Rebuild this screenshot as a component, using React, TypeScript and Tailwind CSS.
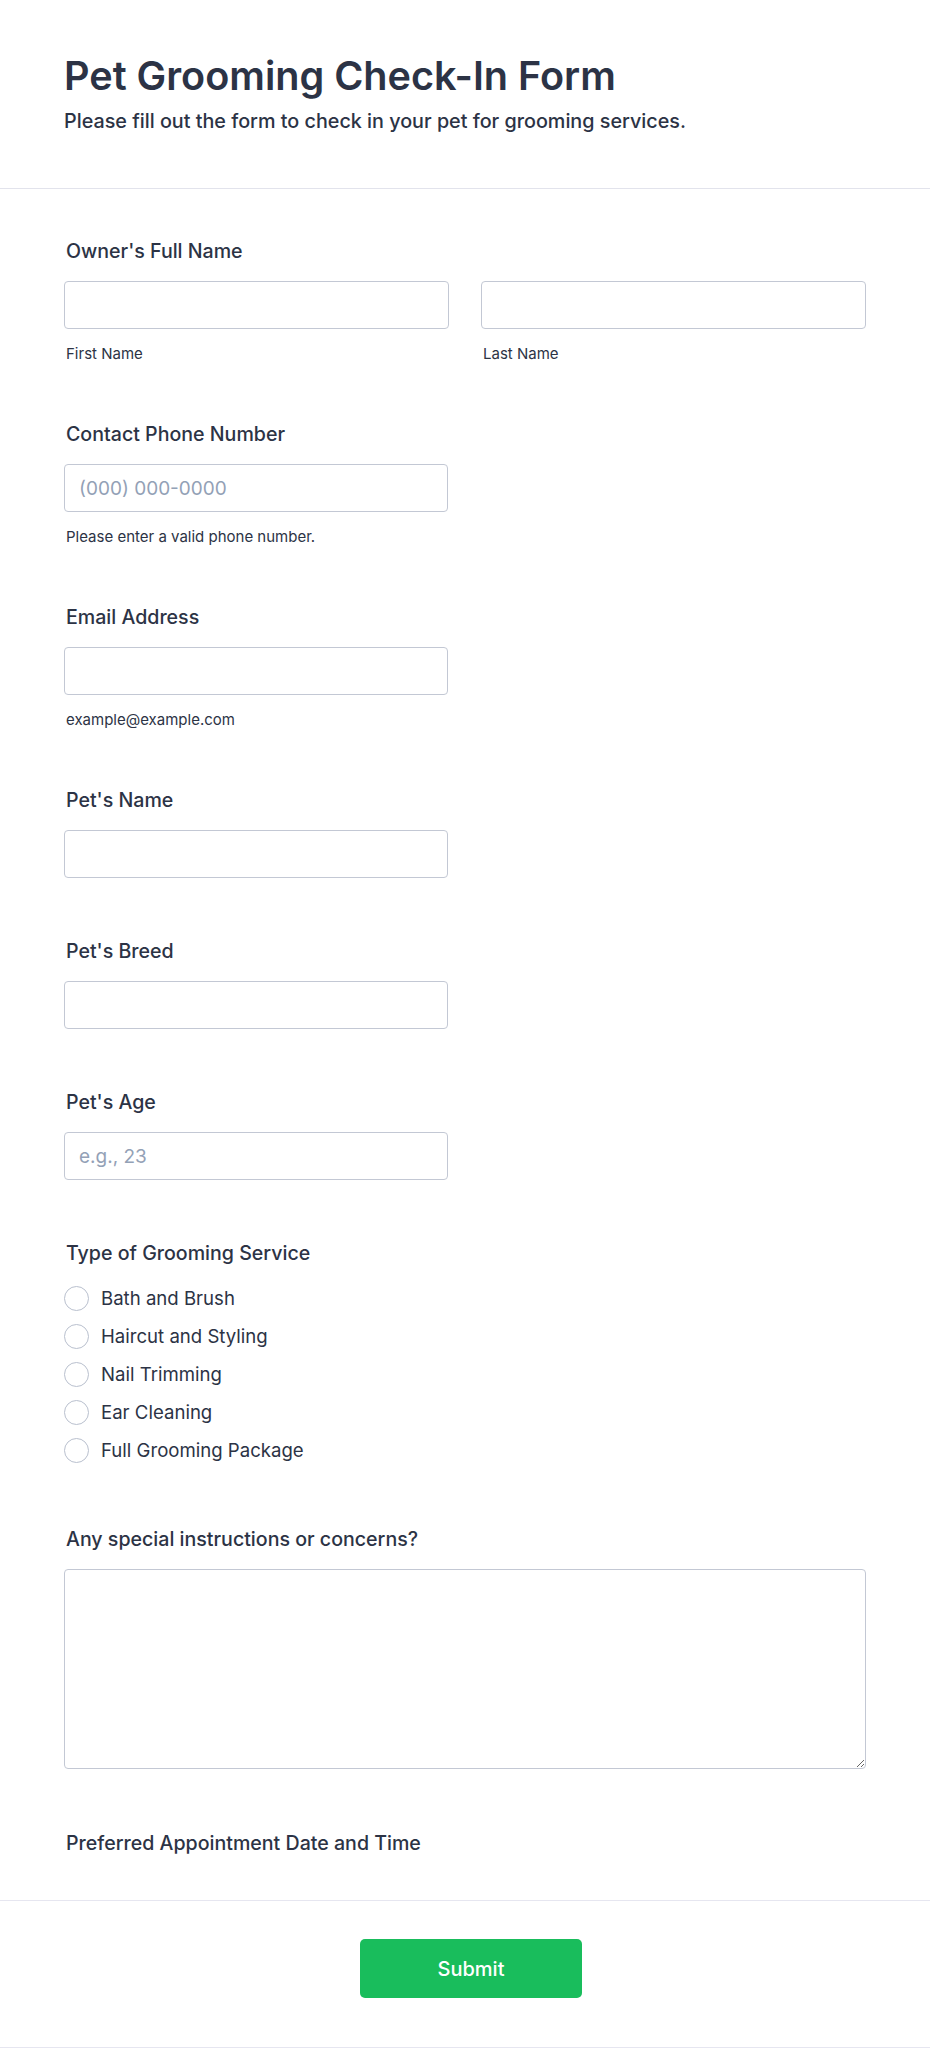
import React from "react";

const labelCls = "block pl-0.5 text-[19.6px] leading-7 font-medium text-[#2c3345]";
const inputCls =
  "block h-12 w-full rounded border border-[#c3c8d4] bg-white px-[14px] text-[19px] text-[#2c3345] outline-none placeholder:text-[#93a1b6]";
const helpCls = "mt-[15px] pl-0.5 text-[15px] leading-5 text-[#2c3345]";

function Section({
  label,
  children,
  className = "",
}: {
  label: string;
  children?: React.ReactNode;
  className?: string;
}) {
  return (
    <div className={className}>
      <label className={labelCls}>{label}</label>
      {children}
    </div>
  );
}

export default function App() {
  const services = [
    "Bath and Brush",
    "Haircut and Styling",
    "Nail Trimming",
    "Ear Cleaning",
    "Full Grooming Package",
  ];
  return (
    <div className="h-[2048px] bg-white font-[family-name:Inter,'Noto_Sans',sans-serif] text-[#2c3345] flex flex-col">
      <header className="px-16 pt-14 pb-[53px] border-b border-[#e2e3ec]">
        <h1 className="text-[39.6px] leading-10 font-semibold">
          Pet Grooming Check-In Form
        </h1>
        <p className="mt-[11px] text-[19.75px] leading-7 font-medium">
          Please fill out the form to check in your pet for grooming services.
        </p>
      </header>

      <main className="h-[1711px] overflow-hidden px-16 pt-12 flex flex-col gap-14">
        <Section label="Owner's Full Name">
          <div className="mt-4 grid grid-cols-2 gap-8">
            <div>
              <input className={inputCls} />
              <div className={helpCls}>First Name</div>
            </div>
            <div>
              <input className={inputCls} />
              <div className={helpCls}>Last Name</div>
            </div>
          </div>
        </Section>

        <Section label="Contact Phone Number">
          <div className="mt-4 w-[384px]">
            <input className={inputCls} placeholder="(000) 000-0000" />
            <div className={helpCls}>Please enter a valid phone number.</div>
          </div>
        </Section>

        <Section label="Email Address">
          <div className="mt-4 w-[384px]">
            <input className={inputCls} />
            <div className={helpCls}>example@example.com</div>
          </div>
        </Section>

        <Section label="Pet's Name" className="pb-[3px]">
          <div className="mt-4 w-[384px]">
            <input className={inputCls} />
          </div>
        </Section>

        <Section label="Pet's Breed" className="pb-[3px]">
          <div className="mt-4 w-[384px]">
            <input className={inputCls} />
          </div>
        </Section>

        <Section label="Pet's Age" className="pb-[3px]">
          <div className="mt-4 w-[384px]">
            <input className={inputCls} placeholder="e.g., 23" />
          </div>
        </Section>

        <Section label="Type of Grooming Service">
          <div className="mt-3 flex flex-col">
            {services.map((s) => (
              <label key={s} className="flex h-[38px] items-center gap-3">
                <span className="h-[25px] w-[25px] shrink-0 rounded-full border border-[#b9c0ce] bg-white" />
                <span className="text-[18.6px] leading-7">{s}</span>
              </label>
            ))}
          </div>
        </Section>

        <Section label="Any special instructions or concerns?" className="pb-1">
          <textarea className="mt-4 block h-[200px] w-full rounded border border-[#c3c8d4] bg-white px-[14px] py-3 text-lg outline-none" />
        </Section>

        <Section label="Preferred Appointment Date and Time" />
      </main>

      <footer className="border-t border-b border-[#e6e6f0] pt-[38px] pb-[49px] pl-3 flex justify-center">
        <button className="h-[59px] w-[222px] rounded-[5px] bg-[#19bd5c] text-xl font-medium text-white">
          Submit
        </button>
      </footer>
    </div>
  );
}
